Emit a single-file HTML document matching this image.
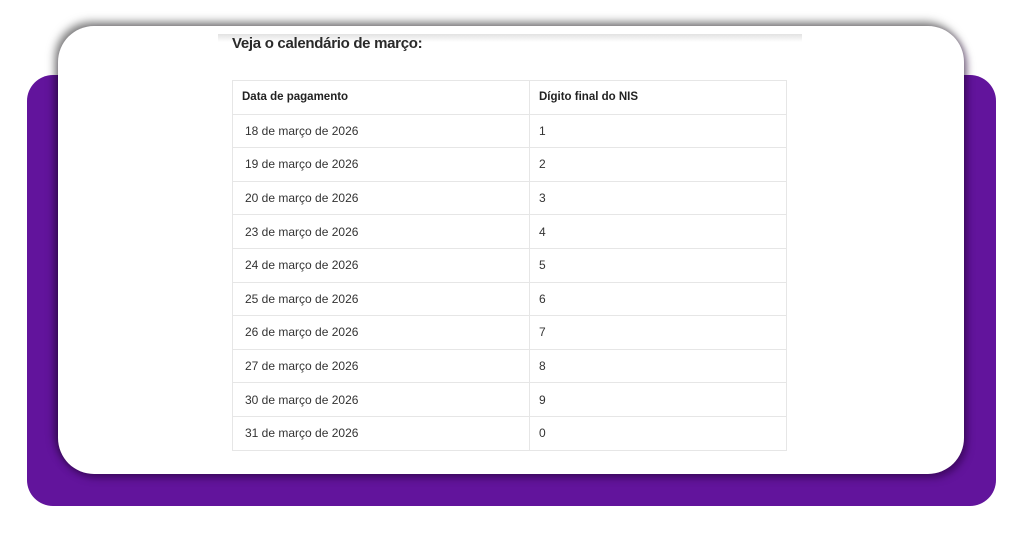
<!DOCTYPE html>
<html><head><meta charset="utf-8"><style>
html,body{margin:0;padding:0;background:#fff;width:1024px;height:536px;overflow:hidden;font-family:"Liberation Sans",sans-serif}
.purple{position:absolute;left:27px;top:75px;width:969px;height:431px;background:#62149c;border-radius:26px}
.card{position:absolute;left:58px;top:26px;width:906px;height:448px;background:#fff;border-radius:36px;box-shadow:-3px -4px 9px rgba(0,0,0,0.5),3px 4px 8px rgba(40,0,60,0.55)}
.strip{position:absolute;left:218px;top:34px;width:584px;height:20px;background:linear-gradient(#e2e2e2,#fff 40%)}
h1{position:absolute;left:232px;top:35px;margin:0;font-size:15px;font-weight:bold;color:#2a2a2a;letter-spacing:-0.3px}
table{position:absolute;left:232px;top:80px;border-collapse:collapse;width:555px;font-size:12px;color:#333}
td{border:1px solid #e6e6e6;height:33.6px;padding:0 0 0 11px;box-sizing:border-box}
td:first-child{width:297px}
tr.h td{font-weight:bold;color:#222;padding-left:9px;font-size:11.5px}
tr:not(.h) td:first-child{padding-left:12px}
tr:not(.h) td:last-child{padding-left:9px}
</style></head><body>
<div class="purple"></div>
<div class="card"></div>
<div class="strip"></div>
<h1>Veja o calendário de março:</h1>
<table>
<tr class="h"><td>Data de pagamento</td><td>Dígito final do NIS</td></tr>
<tr><td>18 de março de 2026</td><td>1</td></tr>
<tr><td>19 de março de 2026</td><td>2</td></tr>
<tr><td>20 de março de 2026</td><td>3</td></tr>
<tr><td>23 de março de 2026</td><td>4</td></tr>
<tr><td>24 de março de 2026</td><td>5</td></tr>
<tr><td>25 de março de 2026</td><td>6</td></tr>
<tr><td>26 de março de 2026</td><td>7</td></tr>
<tr><td>27 de março de 2026</td><td>8</td></tr>
<tr><td>30 de março de 2026</td><td>9</td></tr>
<tr><td>31 de março de 2026</td><td>0</td></tr>
</table>
</body></html>
